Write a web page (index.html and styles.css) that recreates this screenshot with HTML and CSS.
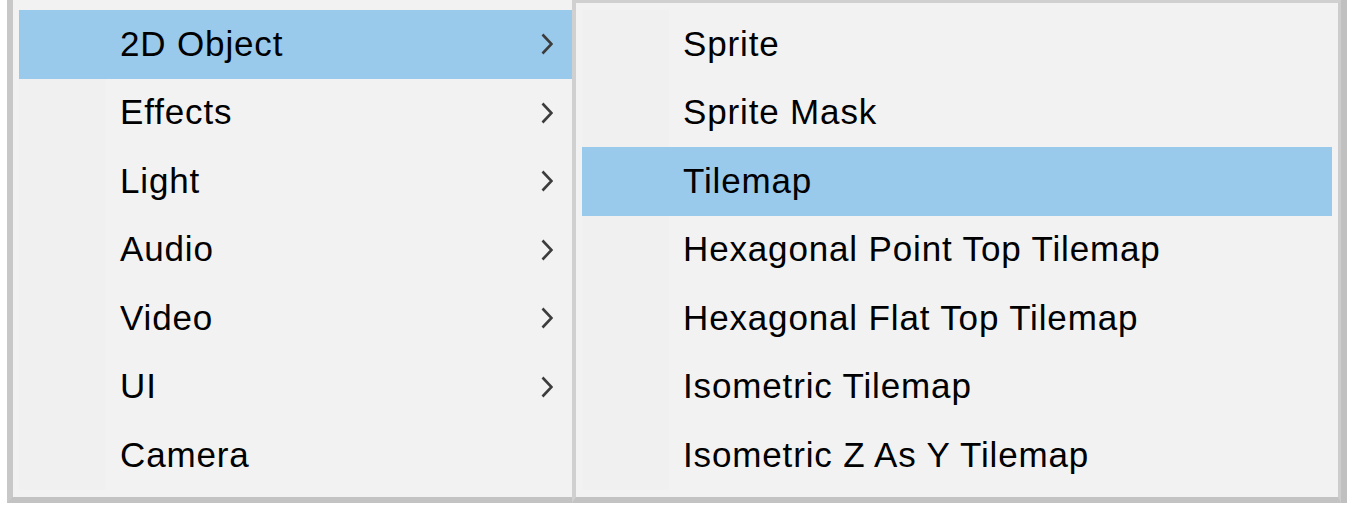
FILE: index.html
```html
<!DOCTYPE html>
<html>
<head>
<meta charset="utf-8">
<link rel="stylesheet" href="styles.css">
</head>
<body>
<div class="screen">
  <div class="menu main">
    <div class="items">
      <div class="item active"><span class="label">2D Object</span><svg class="chev" viewBox="0 0 12 22"><polyline points="1.5,1.5 10.5,11 1.5,20.5"/></svg></div>
      <div class="item"><span class="label">Effects</span><svg class="chev" viewBox="0 0 12 22"><polyline points="1.5,1.5 10.5,11 1.5,20.5"/></svg></div>
      <div class="item"><span class="label">Light</span><svg class="chev" viewBox="0 0 12 22"><polyline points="1.5,1.5 10.5,11 1.5,20.5"/></svg></div>
      <div class="item"><span class="label">Audio</span><svg class="chev" viewBox="0 0 12 22"><polyline points="1.5,1.5 10.5,11 1.5,20.5"/></svg></div>
      <div class="item"><span class="label">Video</span><svg class="chev" viewBox="0 0 12 22"><polyline points="1.5,1.5 10.5,11 1.5,20.5"/></svg></div>
      <div class="item"><span class="label">UI</span><svg class="chev" viewBox="0 0 12 22"><polyline points="1.5,1.5 10.5,11 1.5,20.5"/></svg></div>
      <div class="item"><span class="label">Camera</span></div>
    </div>
  </div>
  <div class="menu sub">
    <div class="items">
      <div class="item"><span class="label">Sprite</span></div>
      <div class="item"><span class="label">Sprite Mask</span></div>
      <div class="item active"><span class="label">Tilemap</span></div>
      <div class="item"><span class="label">Hexagonal Point Top Tilemap</span></div>
      <div class="item"><span class="label">Hexagonal Flat Top Tilemap</span></div>
      <div class="item"><span class="label">Isometric Tilemap</span></div>
      <div class="item"><span class="label">Isometric Z As Y Tilemap</span></div>
    </div>
  </div>
</div>
</body>
</html>
```

FILE: styles.css
```css
html, body {
  margin: 0;
  padding: 0;
  background: #ffffff;
}

.screen {
  display: flex;
  height: 503px;
  font-family: "Liberation Sans", Arial, sans-serif;
  font-size: 35px;
  letter-spacing: 0.85px;
  color: #000;
}

.menu {
  box-sizing: border-box;
  background: #f2f2f2;
  height: 503px;
}

.main {
  margin-left: 7px;
  width: 565px;
  border-left: 6px solid #c8c8c8;
  border-bottom: 6px solid #c3c3c3;
  padding: 10px 0 0 6px;
}

.sub {
  width: 769px;
  border-top: 3px solid #d0d0d0;
  border-left: 4px solid #d0d0d0;
  border-right: 3px solid #cdcdcd;
  border-bottom: 6px solid #c3c3c3;
  padding: 7px 6px 0 6px;
  box-shadow: 6px 0 0 #c0c0c0;
}

.items {
  background: linear-gradient(to right, #f0f0f0 0, #f0f0f0 87px, #f2f2f2 87px);
}

.item {
  height: 68.5px;
  display: flex;
  align-items: center;
  padding-left: 101px;
}

.item.active {
  background: #99c9eb;
}

.label {
  flex: 1;
  white-space: nowrap;
  line-height: 1;
  position: relative;
  top: -1px;
}

.chev {
  width: 12px;
  height: 22px;
  margin-right: 19px;
  fill: none;
  stroke: #3c3c3c;
  stroke-width: 2.6;
  stroke-linejoin: miter;
}
```
